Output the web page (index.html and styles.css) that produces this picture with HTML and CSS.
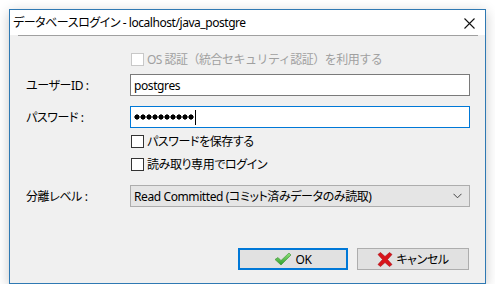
FILE: index.html
```html
<!DOCTYPE html>
<html lang="ja">
<head>
  <meta charset="UTF-8" />
  <title>データベースログイン</title>
  <link rel="stylesheet" href="styles.css">
</head>
<body>

  <div class="dialog">
    <div class="titlebar">
      <span class="title">データベースログイン - localhost/java_postgre</span>
      <svg class="close" width="11" height="11" viewBox="0 0 11 11">
        <path d="M0.5 0.5 L10.5 10.5 M10.5 0.5 L0.5 10.5" stroke="#111" stroke-width="1.1" fill="none"/>
      </svg>
    </div>

    <div class="content">
      <div class="form">
        <div class="row row-os">
          <span></span>
          <label class="check disabled"><span class="box"></span>OS 認証（統合セキュリティ認証）を利用する</label>
        </div>

        <div class="row row-user">
          <span class="label">ユーザーID :</span>
          <div class="input">postgres</div>
        </div>

        <div class="row row-pass">
          <span class="label">パスワード :</span>
          <div class="input focus"><span class="dots"></span><span class="caret"></span></div>
        </div>

        <div class="row row-check1">
          <span></span>
          <label class="check"><span class="box"></span>パスワードを保存する</label>
        </div>

        <div class="row row-check2">
          <span></span>
          <label class="check"><span class="box"></span>読み取り専用でログイン</label>
        </div>

        <div class="row row-level">
          <span class="label">分離レベル :</span>
          <div class="select">
            <span>Read Committed (コミット済みデータのみ読取)</span>
            <svg width="9" height="6" viewBox="0 0 9 6"><path d="M0.5 0.8 L4.5 4.8 L8.5 0.8" stroke="#444" stroke-width="1" fill="none"/></svg>
          </div>
        </div>
      </div>

      <div class="buttons">
        <button class="btn default">
          <svg width="18" height="14" viewBox="0 0 18 14">
            <defs>
              <linearGradient id="g" x1="0" y1="0" x2="0" y2="1">
                <stop offset="0" stop-color="#8fe37a"/>
                <stop offset="1" stop-color="#2e9e2a"/>
              </linearGradient>
            </defs>
            <path d="M1 7.5 L4 5.5 L7 8.5 L15 1 L17 3 L7 13 Z" fill="url(#g)" stroke="#3a8e32" stroke-width="0.6"/>
          </svg>
          OK
        </button>
        <button class="btn">
          <svg width="16" height="15" viewBox="0 0 16 15">
            <path d="M1 2.5 L3.5 0.5 L8 4.5 L12.5 0.5 L15 2.5 L10.5 7.5 L15 12.5 L12.5 14.5 L8 10.5 L3.5 14.5 L1 12.5 L5.5 7.5 Z" fill="#d9141b" stroke="#a50d12" stroke-width="0.6"/>
          </svg>
          キャンセル
        </button>
      </div>
    </div>
  </div>

</body>
</html>
```

FILE: styles.css
```css
* { margin: 0; padding: 0; box-sizing: border-box; }
body { background: #fff; font-family: "Noto Sans", "Noto Sans CJK JP", sans-serif; font-size: 12px; color: #000; font-feature-settings: "palt"; letter-spacing: -0.4px; }

.dialog { position: relative; margin: 9px 0 0 9px; width: 477px; height: 275px; background: #f0f0f0; border: 1px solid #2f79b3; box-shadow: 0 3px 12px rgba(0,0,0,0.22); display: flex; flex-direction: column; }

.titlebar { height: 25px; background: #fff; display: flex; align-items: center; justify-content: space-between; padding: 1px 10px 0 3px; }
.title { font-size: 12px; line-height: 16px; color: #000; letter-spacing: -0.45px; }
.close { display: block; margin-top: 1px; }

.content { flex: 1; display: flex; flex-direction: column; border-top: 1px solid #a0a0a0; margin: 0 7px 0 8px; padding: 0 8px; }

.form { display: flex; flex-direction: column; }
.row { display: grid; grid-template-columns: 104px 1fr; align-items: center; }
.label { color: #000; }

.row-os { height: 20px; margin-top: 13px; }
.row-user { height: 22px; margin-top: 5px; }
.row-pass { height: 22px; margin-top: 10px; }
.row-check1 { height: 20px; margin-top: 3px; }
.row-check2 { height: 20px; margin-top: 3px; }
.row-level { height: 22px; margin-top: 11px; }

.input { height: 22px; border: 1px solid #7a7a7a; background: #fff; padding: 0 3px; display: flex; align-items: center; }
.input.focus { border-color: #0078d7; }
.dots { width: 60px; height: 6px; background: radial-gradient(circle at 3px 3px, #000 2.3px, transparent 2.9px) 0 0 / 6px 6px repeat-x; }
.caret { width: 1px; height: 15px; background: #000; margin-left: 1px; }

.check { display: flex; align-items: center; gap: 3px; margin-left: 1px; }
.check .box { width: 13px; height: 13px; border: 1px solid #333; background: #fff; }
.check.disabled { color: #a0a0a0; font-feature-settings: normal; letter-spacing: -0.5px; }
.check.disabled .box { border-color: #c8c8c8; }

.select { height: 22px; border: 1px solid #adadad; background: #e5e5e5; display: flex; align-items: center; justify-content: space-between; padding: 0 7px 0 3px; }
.select svg { display: block; }

.buttons { display: flex; justify-content: flex-end; gap: 9px; margin-top: 41px; padding-right: 1px; }
.btn { width: 110px; height: 22px; border: 1px solid #adadad; background: #e1e1e1; font-family: inherit; font-size: 12px; font-feature-settings: "palt"; letter-spacing: -0.4px; display: flex; align-items: center; justify-content: center; gap: 3px; }
.btn.default { border: 2px solid #0078d7; }
.btn svg { display: block; }
.btn:last-child { width: 112px; }
```
